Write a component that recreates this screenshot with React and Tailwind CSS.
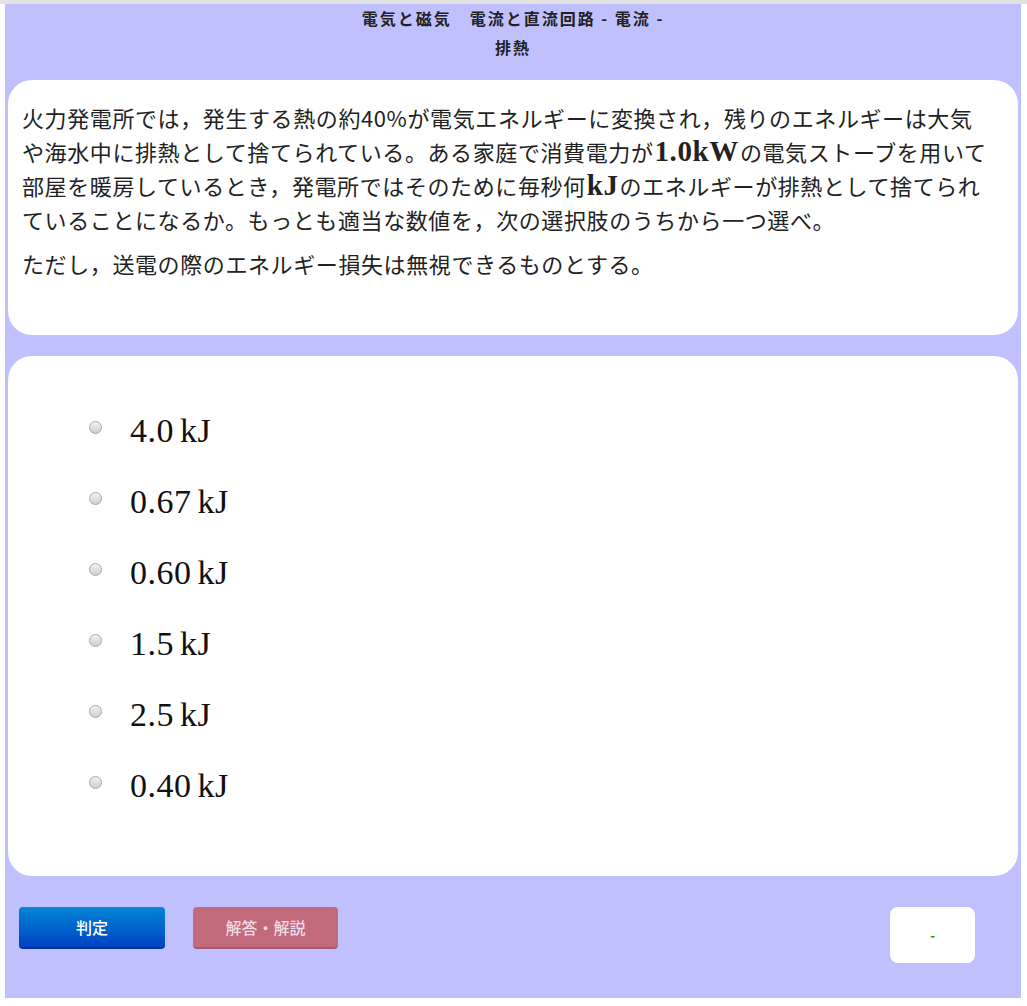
import React from 'react';

const jp = { fontFamily: '"Noto Sans CJK JP", "Noto Sans", sans-serif' };
const serif = { fontFamily: '"Liberation Serif", "Times New Roman", serif' };

const OPTIONS = ['4.0', '0.67', '0.60', '1.5', '2.5', '0.40'];

function M({ children }) {
  return (
    <span className="text-[29px] font-bold leading-none px-[1px]" style={serif}>
      {children}
    </span>
  );
}

function Radio() {
  return (
    <span className="inline-block w-[13px] h-[13px] rounded-full border border-[#a8a8a8] bg-gradient-to-b from-[#f2f2f2] to-[#cfcfcf] shrink-0" />
  );
}

export default function App() {
  return (
    <div className="min-h-screen bg-white border-t-[4px] border-[#e2e2e2]" style={jp}>
      <div className="ml-[5px] mr-[6px] bg-[#c0c0ff] pb-[35px]">
        <div className="text-center text-[16px] tracking-[2px] font-bold leading-[29px] text-[#222]">
          電気と磁気　電流と直流回路 - 電流 -
          <br />
          排熱
        </div>

        <div className="mx-[3px] mt-[18px] bg-white rounded-[24px] pl-[14px] pr-[10px] pt-[20px] h-[255px] text-[22px] tracking-[0.6px] leading-[34px] text-[#222]">
          <p className="whitespace-nowrap">
            火力発電所では，発生する熱の約40%が電気エネルギーに変換され，残りのエネルギーは大気
            <br />
            や海水中に排熱として捨てられている。ある家庭で消費電力が<M>1.0kW</M>の電気ストーブを用いて
            <br />
            部屋を暖房しているとき，発電所ではそのために毎秒何<M>kJ</M>のエネルギーが排熱として捨てられ
            <br />
            ていることになるか。もっとも適当な数値を，次の選択肢のうちから一つ選べ。
          </p>
          <p className="mt-[10px]">ただし，送電の際のエネルギー損失は無視できるものとする。</p>
        </div>

        <div className="mx-[3px] mt-[21px] bg-white rounded-[24px] h-[520px] pt-[39px] pl-[81px]">
          {OPTIONS.map((v) => (
            <div key={v} className="h-[71px] flex items-center gap-[28px]">
              <span className="-mt-[6px] flex">
                <Radio />
              </span>
              <span className="text-[34px] text-[#111] leading-none tracking-[0.5px]" style={serif}>
                {v}
                <span className="ml-[6px]">kJ</span>
              </span>
            </div>
          ))}
        </div>

        <div className="mt-[31px] flex items-start pl-[14px] pr-[46px]">
          <button className="w-[146px] h-[42px] rounded-[4px] bg-gradient-to-b from-[#0a86d6] to-[#0040c4] border-b-2 border-[#0034a0] text-white text-[16px] font-medium">
            判定
          </button>
          <button className="ml-[28px] w-[145px] h-[42px] rounded-[4px] bg-[#c06a7a] border-b-2 border-[#a85a6c] text-[#f0dcea] text-[16px] font-medium">
            解答・解説
          </button>
          <div className="ml-auto w-[85px] h-[56px] rounded-[8px] bg-white flex items-center justify-center text-[#18a030] text-[14px] font-bold">
            -
          </div>
        </div>
      </div>
    </div>
  );
}
